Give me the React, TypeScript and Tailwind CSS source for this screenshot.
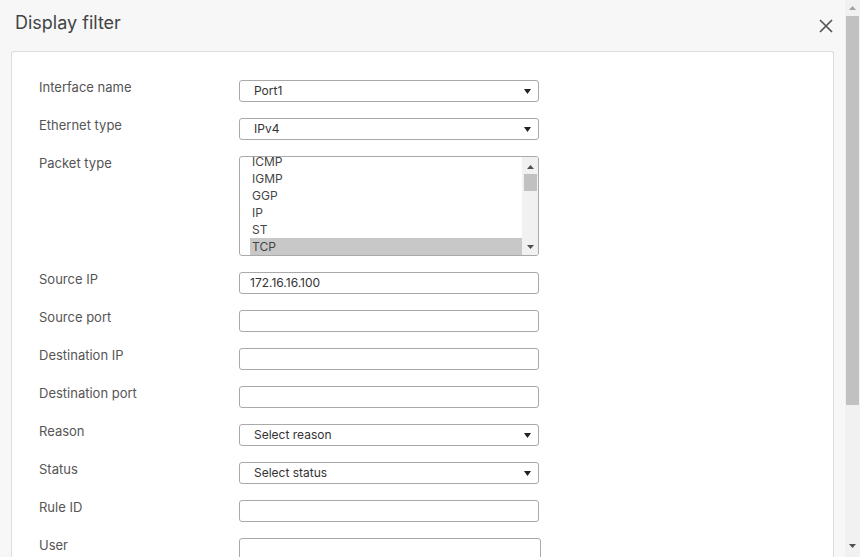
import React from 'react'

const font = { fontFamily: 'Inter, "Noto Sans", sans-serif' }

function Caret() {
  return (
    <svg width="7" height="5" viewBox="0 0 7 5" className="shrink-0">
      <path d="M0 0h7L3.5 5z" fill="#222" />
    </svg>
  )
}

function SelectBox({ value }: { value: string }) {
  return (
    <div className="flex h-[22px] w-[300px] items-center justify-between rounded-[3px] border border-[#a9a9a9] bg-white pl-[14px] pr-[7px] text-[12px] text-[#333]">
      <span>{value}</span>
      <Caret />
    </div>
  )
}

function TextBox({ value = '', wide = false }: { value?: string; wide?: boolean }) {
  return (
    <div
      className={`flex h-[22px] items-center rounded-[3px] border border-[#a9a9a9] bg-white pl-[10px] text-[12px] text-[#333] ${
        wide ? 'w-[302px]' : 'w-[300px]'
      }`}
    >
      {value}
    </div>
  )
}

function PacketList() {
  const items = ['ICMP', 'IGMP', 'GGP', 'IP', 'ST', 'TCP']
  return (
    <div className="flex h-[100px] w-[300px] overflow-hidden rounded-[3px] border border-[#a9a9a9] bg-white">
      <div className="flex flex-1 flex-col overflow-hidden pl-[10px] text-[12px] text-[#444]">
        <div className="-mt-[4px] flex flex-col">
          {items.map((item) => (
            <div
              key={item}
              className={`h-[17px] pl-[2px] leading-[17px] ${item === 'TCP' ? 'bg-[#c8c8c8]' : ''}`}
            >
              {item}
            </div>
          ))}
        </div>
      </div>
      <div className="flex w-[16px] flex-col items-center bg-[#f1f1f1]">
        <svg width="7" height="4" viewBox="0 0 7 4" className="mt-[8px]">
          <path d="M0 4h7L3.5 0z" fill="#505050" />
        </svg>
        <div className="mt-[5px] h-[17px] w-[13px] bg-[#c1c1c1]" />
        <div className="flex-1" />
        <svg width="7" height="4" viewBox="0 0 7 4" className="mb-[6px]">
          <path d="M0 0h7L3.5 4z" fill="#505050" />
        </svg>
      </div>
    </div>
  )
}

function Row({ label, children }: { label: string; children: React.ReactNode }) {
  return (
    <div className="flex items-start">
      <div className="w-[200px] shrink-0 text-[13px] leading-[14px] text-[#555]">{label}</div>
      {children}
    </div>
  )
}

export default function App() {
  return (
    <div className="flex h-[557px] w-[860px] overflow-hidden bg-[#f7f7f7]" style={font}>
      <div className="flex flex-1 flex-col">
        <div className="flex h-[51px] shrink-0 items-start justify-between pl-[15px] pr-[12px]">
          <h1 className="mt-[9px] text-[18px] text-[#444]">Display filter</h1>
          <svg width="14" height="14" viewBox="0 0 14 14" className="mt-[19px]">
            <path d="M1 1l12 12M13 1L1 13" stroke="#555" strokeWidth="1.7" />
          </svg>
        </div>
        <div className="mx-[11px] flex flex-1 flex-col gap-[16px] rounded-t-[3px] border border-b-0 border-[#dcdcdc] bg-white pl-[27px] pt-[28px]">
          <Row label="Interface name">
            <SelectBox value="Port1" />
          </Row>
          <Row label="Ethernet type">
            <SelectBox value="IPv4" />
          </Row>
          <Row label="Packet type">
            <PacketList />
          </Row>
          <Row label="Source IP">
            <TextBox value="172.16.16.100" />
          </Row>
          <Row label="Source port">
            <TextBox />
          </Row>
          <Row label="Destination IP">
            <TextBox />
          </Row>
          <Row label="Destination port">
            <TextBox />
          </Row>
          <Row label="Reason">
            <SelectBox value="Select reason" />
          </Row>
          <Row label="Status">
            <SelectBox value="Select status" />
          </Row>
          <Row label="Rule ID">
            <TextBox />
          </Row>
          <Row label="User">
            <TextBox wide />
          </Row>
        </div>
      </div>
      <div className="flex w-[15px] shrink-0 flex-col items-center bg-[#f1f1f1]">
        <svg width="7" height="4" viewBox="0 0 7 4" className="mt-[6px]">
          <path d="M0 4h7L3.5 0z" fill="#a3a3a3" />
        </svg>
        <div className="mt-[6px] h-[389px] w-[13px] bg-[#c1c1c1]" />
        <div className="flex-1" />
        <svg width="7" height="4" viewBox="0 0 7 4" className="mb-[9px]">
          <path d="M0 0h7L3.5 4z" fill="#505050" />
        </svg>
      </div>
    </div>
  )
}
